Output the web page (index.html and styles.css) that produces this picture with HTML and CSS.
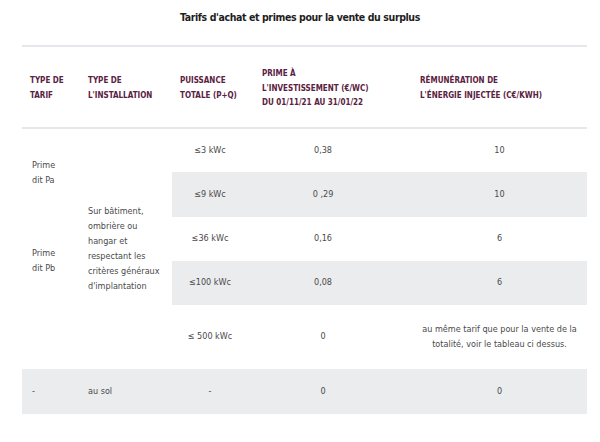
FILE: index.html
```html
<!DOCTYPE html>
<html lang="fr">
<head>
<meta charset="utf-8">
<title>Tarifs d'achat et primes pour la vente du surplus</title>
<link rel="stylesheet" href="styles.css">
</head>
<body>
<h2 class="title">Tarifs d'achat et primes pour la vente du surplus</h2>
<table class="tarifs">
  <colgroup>
    <col class="c1"><col class="c2"><col class="c3"><col class="c4"><col class="c5">
  </colgroup>
  <thead>
    <tr>
      <th>Type de<br>tarif</th>
      <th>Type de<br>l'installation</th>
      <th>Puissance<br>totale (P+Q)</th>
      <th>Prime à<br>l'investissement (€/Wc)<br>du 01/11/21 au 31/01/22</th>
      <th>Rémunération de<br>l'énergie injectée (c€/kWh)</th>
    </tr>
  </thead>
  <tbody>
    <tr class="r">
      <td class="left first" rowspan="2">Prime<br>dit Pa</td>
      <td class="left" rowspan="5">Sur bâtiment,<br>ombrière ou<br>hangar et<br>respectant les<br>critères généraux<br>d'implantation</td>
      <td class="pw">≤3 kWc</td>
      <td class="pr">0,38</td>
      <td class="rem">10</td>
    </tr>
    <tr class="r alt h45">
      <td class="pw">≤9 kWc</td>
      <td class="pr">0 ,29</td>
      <td class="rem">10</td>
    </tr>
    <tr class="r">
      <td class="left first" rowspan="2">Prime<br>dit Pb</td>
      <td class="pw">≤36 kWc</td>
      <td class="pr">0,16</td>
      <td class="rem">6</td>
    </tr>
    <tr class="r alt">
      <td class="pw">≤100 kWc</td>
      <td class="pr">0,08</td>
      <td class="rem">6</td>
    </tr>
    <tr class="r tall">
      <td class="left first"></td>
      <td class="pw">≤ 500 kWc</td>
      <td class="pr">0</td>
      <td class="rem">au même tarif que pour la vente de la<br>totalité, voir le tableau ci dessus.</td>
    </tr>
    <tr class="r alt h45">
      <td class="left first">-</td>
      <td class="left">au sol</td>
      <td class="pw">-</td>
      <td class="pr">0</td>
      <td class="rem">0</td>
    </tr>
  </tbody>
</table>
</body>
</html>
```

FILE: styles.css
```css
html, body {
  margin: 0;
  padding: 0;
  background: #ffffff;
}

body {
  font-family: "DejaVu Sans Condensed", "Liberation Sans Narrow", "DejaVu Sans", sans-serif;
  font-stretch: condensed;
  color: #4a4a4a;
}

.title {
  margin: 9px 0 0;
  font-size: 10.5px;
  line-height: 16px;
  letter-spacing: -0.4px;
  font-weight: bold;
  color: #1e1e1e;
  text-align: center;
}

.tarifs {
  margin: 20px 0 0 22px;
  width: 565px;
  border-collapse: collapse;
  table-layout: fixed;
  border-top: 2px solid #e4e8ec;
}

.c1 { width: 58px; }
.c2 { width: 92px; }
.c3 { width: 82px; }
.c4 { width: 158px; }
.c5 { width: 175px; }

.tarifs th {
  padding: 20px 8px 16px;
  text-align: left;
  vertical-align: middle;
  font-size: 8px;
  line-height: 14.5px;
  font-weight: bold;
  text-transform: uppercase;
  color: #5a2141;
  border-bottom: 2px solid #e4e8ec;
}

.tarifs td {
  padding: 0 8px;
  font-size: 9px;
  line-height: 15px;
  vertical-align: middle;
  text-align: center;
  background: #ffffff;
}

.tarifs .r { height: 44px; }
.tarifs .r.h45 { height: 45px; }
.tarifs .r.alt td { background: #ebecee; }
.tarifs .r.alt td[rowspan] { background: #ffffff; }
.tarifs .tall { height: 64px; }

.tarifs td.left { text-align: left; }
.tarifs td.first { padding-left: 10px; }
.tarifs td.pw { padding-right: 14px; }
.tarifs td.pr { padding-right: 28px; }
.tarifs td.rem { padding: 0 8px; }
```
